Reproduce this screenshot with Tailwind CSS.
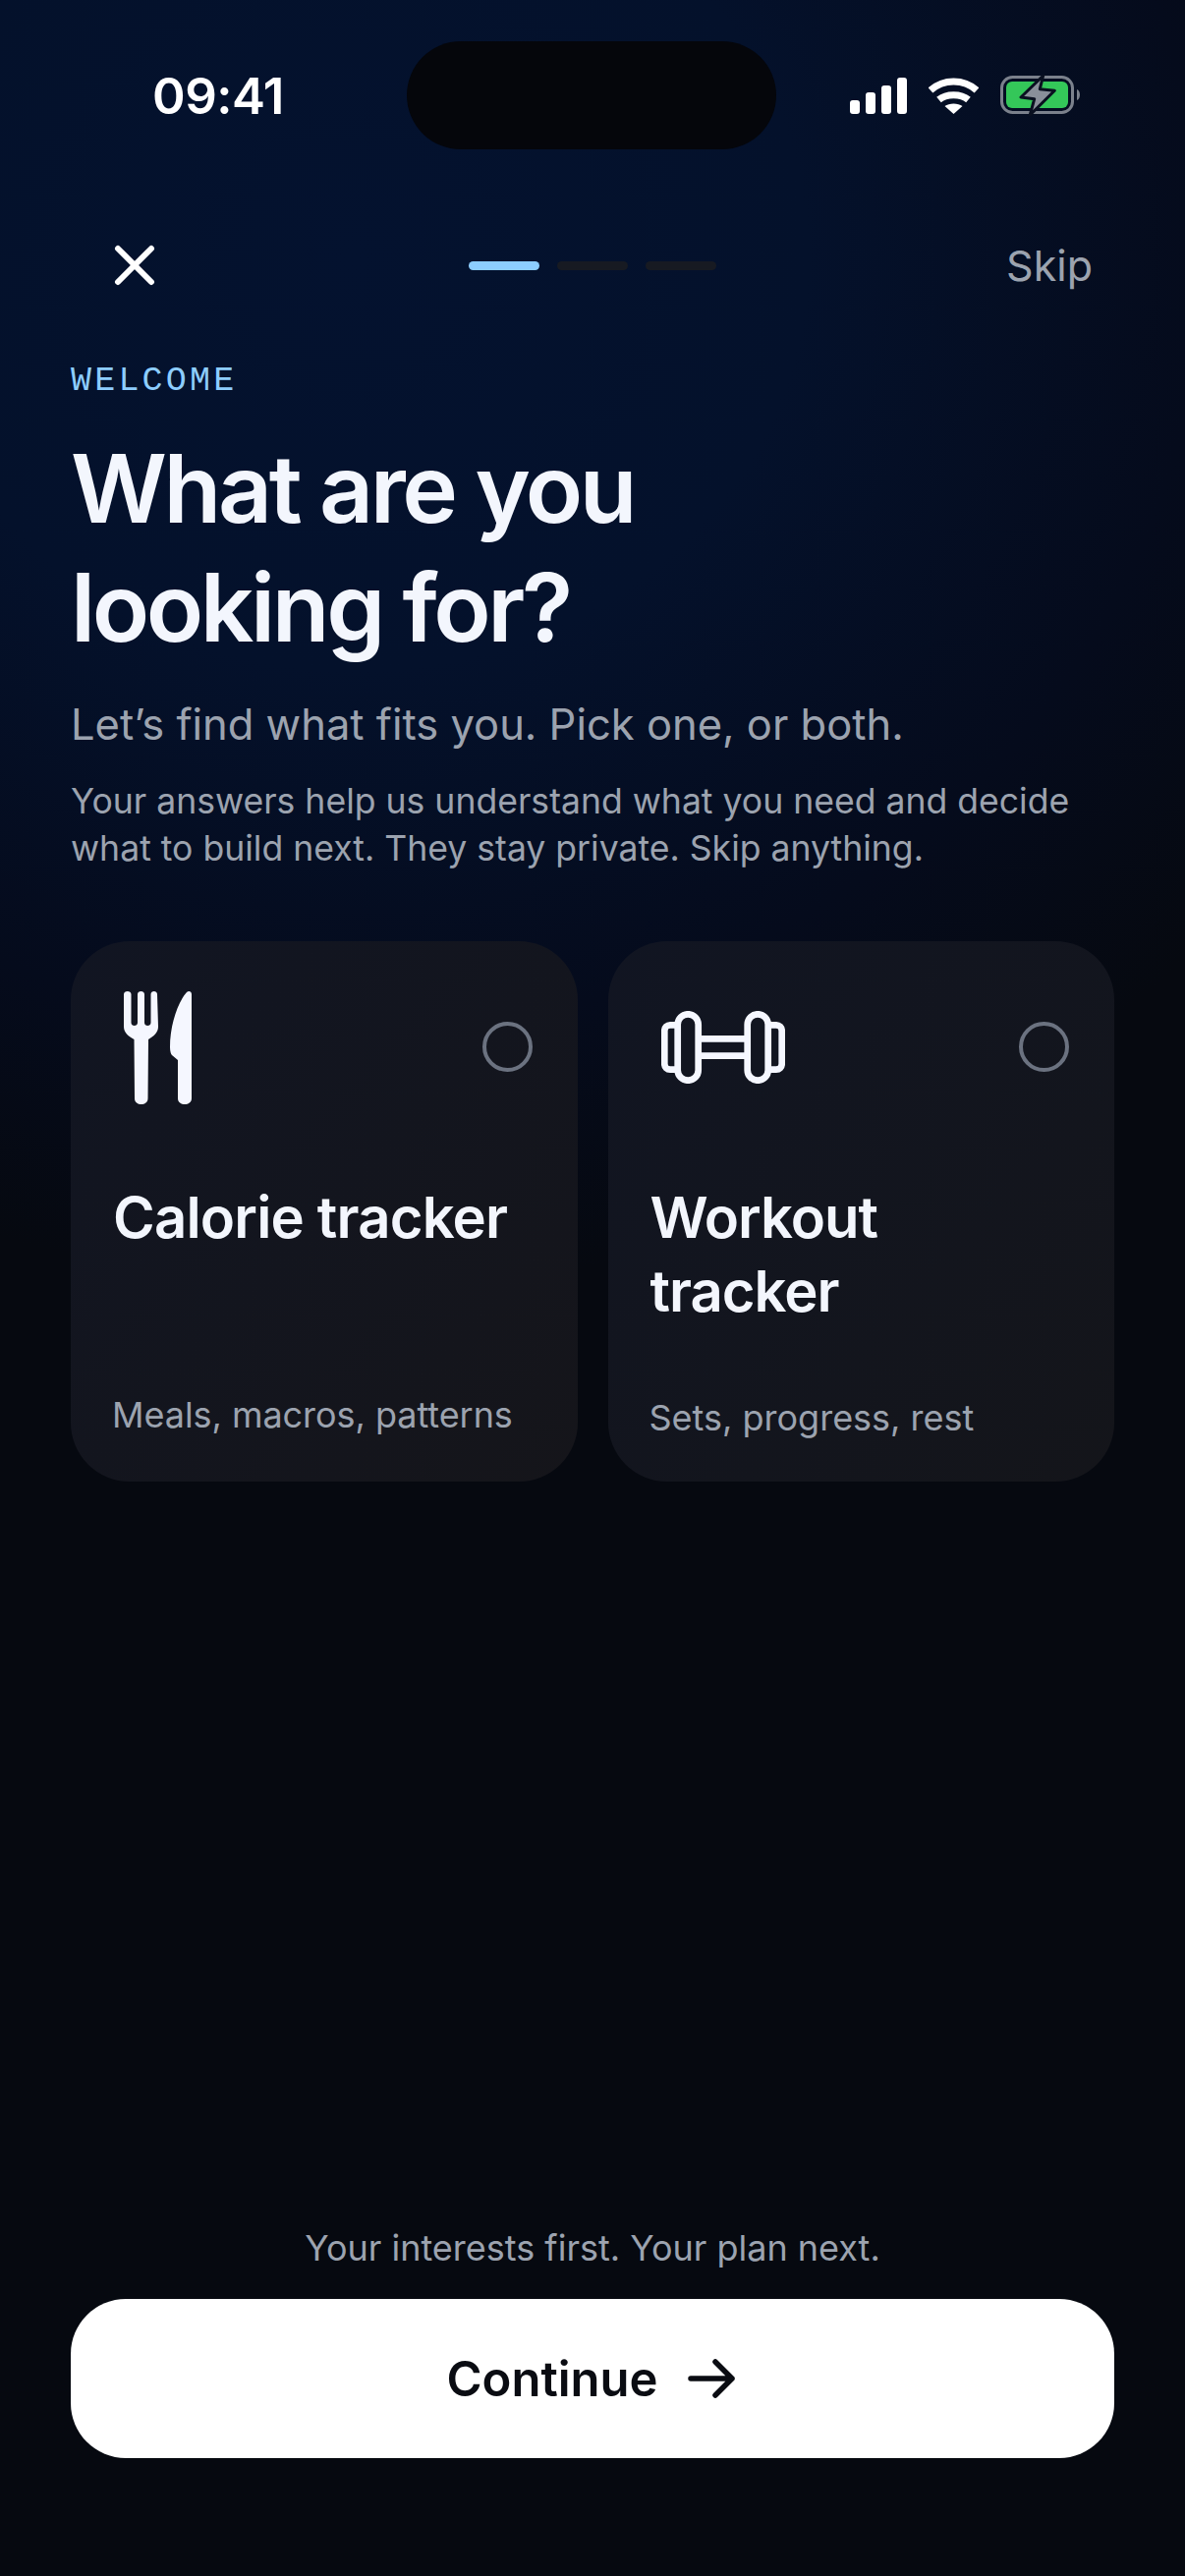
<!DOCTYPE html>
<html lang="en">
<head>
    <meta charset="UTF-8">
    <meta name="viewport" content="width=device-width, initial-scale=1.0">
    <title>What are you looking for?</title>
    <script src="https://cdn.jsdelivr.net/npm/@tailwindcss/browser@4"></script>
</head>
<body class="overflow-hidden bg-[#060910]">
    <div class="relative w-[1206px] h-[2622px] flex flex-col font-['Inter',sans-serif] bg-[radial-gradient(ellipse_1150px_1050px_at_30%_10%,#04122f_0%,#04112b_40%,#050b1c_75%,#060910_100%)]">
        <!-- dynamic island -->
        <div class="absolute left-[414px] top-[42px] w-[376px] h-[110px] rounded-[55px] bg-[#05060b]"></div>

        <!-- status bar -->
        <div class="h-[194px] flex items-center justify-between pl-[155px] pr-[106px] shrink-0">
            <span class="text-white text-[51px] leading-none font-semibold tracking-[-0.5px]">09:41</span>
            <div class="flex items-center gap-[22px]">
                <svg width="58" height="37" viewBox="0 0 58 37" fill="#fff">
                    <rect x="0" y="23" width="10" height="14" rx="3"/>
                    <rect x="16" y="15" width="10" height="22" rx="3"/>
                    <rect x="32" y="8" width="10" height="29" rx="3"/>
                    <rect x="48" y="0" width="10" height="37" rx="3"/>
                </svg>
                <svg width="51" height="37" viewBox="0 0 51 37" fill="none" stroke="#fff" stroke-width="7">
                    <path d="M2 13C15 1 36 1 49 13"/>
                    <path d="M10.5 22.5C18 16 33 16 40.5 22.5"/>
                    <path d="M25.5 37L16.5 29C21 25.5 30 25.5 34.5 29Z" fill="#fff" stroke="none"/>
                </svg>
                <svg width="82" height="42" viewBox="0 0 82 42">
                    <rect x="1.5" y="2.5" width="72" height="36" rx="11" fill="none" stroke="#7b818c" stroke-width="3"/>
                    <rect x="6" y="7" width="63" height="27" rx="6" fill="#34c759"/>
                    <path d="M78 15c4 1 4 10 0 11z" fill="#7b818c"/>
                    <path d="M43.7 1L21 23L34.7 24.7L30.3 41L55.3 16.3L40.3 14.7Z" fill="#8a8f9a" stroke="#0a1020" stroke-width="3" stroke-linejoin="round"/>
                </svg>
            </div>
        </div>

        <!-- nav -->
        <div class="h-[152px] flex items-center justify-between pl-[114px] pr-[94px] shrink-0">
            <svg width="46" height="46" viewBox="0 0 46 46" fill="none" stroke="#fff" stroke-width="6" stroke-linecap="round">
                <path d="M6 6L40 40M40 6L6 40"/>
            </svg>
            <div class="flex gap-[18px] ml-[22px]">
                <div class="w-[72px] h-[9px] rounded-full bg-[#8dcdff]"></div>
                <div class="w-[72px] h-[9px] rounded-full bg-[#171a22]"></div>
                <div class="w-[72px] h-[9px] rounded-full bg-[#171a22]"></div>
            </div>
            <span class="text-[#9ca3af] text-[43px] leading-none">Skip</span>
        </div>

        <div class="px-[72px] flex flex-col flex-1">
            <div class="font-['Liberation_Mono',monospace] text-[#8dcdff] text-[35px] leading-none tracking-[3.2px] mt-[25px]">WELCOME</div>
            <h1 class="text-[#f3f6fd] text-[96px] leading-[121px] font-semibold tracking-[-3.4px] mt-[31px]">What are you<br>looking for?</h1>
            <p class="text-[#9ca3af] text-[43.5px] leading-[54px] mt-[31px]">Let’s find what fits you. Pick one, or both.</p>
            <p class="text-[#9ca3af] text-[35.6px] leading-[48px] mt-[28px]">Your answers help us understand what you need and decide<br>what to build next. They stay private. Skip anything.</p>

            <div class="grid grid-cols-2 gap-[31px] mt-[70px]">
                <div class="h-[550px] rounded-[60px] bg-gradient-to-br from-[#111522] to-[#15151a] pl-[43px] pr-[46px] flex flex-col">
                    <div class="flex justify-between items-start pt-[50px]">
                        <svg class="ml-[11px]" width="69" height="116" viewBox="0 0 69 116" fill="#f5f7ff">
                            <path d="M0 4C0 0 7.5 0 7.5 4V33C7.5 37 14 37 14 33V4C14 0 21 0 21 4V33C21 37 27.5 37 27.5 33V4C27.5 0 34 0 34 4L35 37C35 43 30 47 25 50L24.5 110C24.5 118 11 118 11 110L10.5 50C5 47 0 43 0 37Z"/>
                            <path d="M69 4V110C69 118 55 118 55 110V71L49 66C48 65 47 62 47 58C47 35 55 12 64 2C66 0 69 1 69 4Z"/>
                        </svg>
                        <div class="w-[51px] h-[51px] rounded-full border-[4px] border-[#6b7280] mt-[32px]"></div>
                    </div>
                    <div class="text-[#f3f6fd] text-[58px] leading-[75px] font-semibold tracking-[-0.8px] mt-[78px]">Calorie tracker</div>
                    <div class="text-[#9ca3af] text-[36px] leading-[48px] tracking-[-0.05px] -ml-[1px] mt-auto mb-[44px]">Meals, macros, patterns</div>
                </div>
                <div class="h-[550px] rounded-[60px] bg-gradient-to-br from-[#111522] to-[#14151a] pl-[43px] pr-[46px] flex flex-col">
                    <div class="flex justify-between items-start pt-[50px] h-[166px]">
                        <svg class="ml-[11px] mt-[21px]" width="126" height="74" viewBox="0 0 126 74" fill="none" stroke="#f5f7ff" stroke-width="6.7" stroke-linejoin="round">
                            <rect x="16.7" y="3.3" width="21" height="67.4" rx="10.5"/>
                            <path d="M15 14.3H9A5.7 5.7 0 0 0 3.3 20V54A5.7 5.7 0 0 0 9 59.7H15"/>
                            <rect x="87.7" y="3.3" width="21" height="67.4" rx="10.5"/>
                            <path d="M111 14.3H117A5.7 5.7 0 0 1 122.7 20V54A5.7 5.7 0 0 1 117 59.7H111"/>
                            <path d="M38 28.3H88M38 45.7H88"/>
                        </svg>
                        <div class="w-[51px] h-[51px] rounded-full border-[4px] border-[#6b7280] mt-[32px]"></div>
                    </div>
                    <div class="text-[#f3f6fd] text-[58px] leading-[75px] font-semibold tracking-[-1px] mt-[78px]">Workout<br>tracker</div>
                    <div class="text-[#9ca3af] text-[36px] leading-[48px] -ml-[1px] mt-auto mb-[41px]">Sets, progress, rest</div>
                </div>
            </div>

            <div class="mt-auto pb-[120px]">
                <p class="text-center text-[#9ca3af] text-[36px] leading-[48px]">Your interests first. Your plan next.</p>
                <div class="mt-[28px] h-[162px] rounded-[56px] bg-white flex items-center justify-center gap-[30px] pr-[4px]">
                    <span class="text-[#0a0c12] text-[49px] leading-none font-semibold">Continue</span>
                    <svg width="48" height="40" viewBox="0 0 48 40" fill="none" stroke="#0a0c12" stroke-width="5.5" stroke-linecap="round" stroke-linejoin="round">
                        <path d="M3 20H45M28 3L45 20L28 37"/>
                    </svg>
                </div>
            </div>
        </div>
    </div>
</body>
</html>
